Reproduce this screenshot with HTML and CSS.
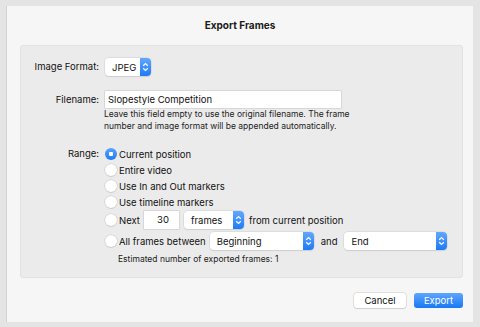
FILE: index.html
```html
<!DOCTYPE html>
<html lang="en">
<head>
  <meta charset="UTF-8" />
  <title>Export Frames</title>
  <link rel="stylesheet" href="styles.css">
</head>
<body>
  <div class="dialog">
    <div class="title">Export Frames</div>

    <div class="group">
      <div class="row format-row">
        <div class="label">Image Format:</div>
        <div class="popup format-popup">
          <span>JPEG</span>
          <span class="stepper"><svg width="7" height="10" viewBox="0 0 7 10"><path d="M1.2 3.8 3.5 1.6 5.8 3.8M1.2 6.2 3.5 8.4 5.8 6.2" fill="none" stroke="#fff" stroke-width="1.2"/></svg></span>
        </div>
      </div>

      <div class="row filename-row">
        <div class="label">Filename:</div>
        <div class="field name-field">Slopestyle Competition</div>
      </div>
      <div class="help">Leave this field empty to use the original filename. The frame<br>number and image format will be appended automatically.</div>

      <div class="row range-row">
        <div class="label">Range:</div>
        <div class="options">
          <div class="option"><span class="radio on"></span>Current position</div>
          <div class="option"><span class="radio"></span>Entire video</div>
          <div class="option"><span class="radio"></span>Use In and Out markers</div>
          <div class="option"><span class="radio"></span>Use timeline markers</div>
          <div class="option next">
            <span class="radio"></span>Next
            <div class="field count-field">30</div>
            <div class="popup unit-popup">
              <span>frames</span>
              <span class="stepper"><svg width="7" height="10" viewBox="0 0 7 10"><path d="M1.2 3.8 3.5 1.6 5.8 3.8M1.2 6.2 3.5 8.4 5.8 6.2" fill="none" stroke="#fff" stroke-width="1.2"/></svg></span>
            </div>
            from current position
          </div>
          <div class="option between">
            <span class="radio"></span>All frames between
            <div class="popup start-popup">
              <span>Beginning</span>
              <span class="stepper"><svg width="7" height="10" viewBox="0 0 7 10"><path d="M1.2 3.8 3.5 1.6 5.8 3.8M1.2 6.2 3.5 8.4 5.8 6.2" fill="none" stroke="#fff" stroke-width="1.2"/></svg></span>
            </div>
            and
            <div class="popup end-popup">
              <span>End</span>
              <span class="stepper"><svg width="7" height="10" viewBox="0 0 7 10"><path d="M1.2 3.8 3.5 1.6 5.8 3.8M1.2 6.2 3.5 8.4 5.8 6.2" fill="none" stroke="#fff" stroke-width="1.2"/></svg></span>
            </div>
          </div>
          <div class="estimate">Estimated number of exported frames: 1</div>
        </div>
      </div>
    </div>

    <div class="buttons">
      <button class="btn cancel">Cancel</button>
      <button class="btn export">Export</button>
    </div>
  </div>
</body>
</html>
```

FILE: styles.css
```css
body { margin: 0; padding: 6px 7px 5px 6px; background: #e4e4e4; font-family: Inter, "Liberation Sans", sans-serif; font-size: 9.5px; color: #111; }
.dialog { height: 316px; background: #f6f6f6; border-left: 1px solid #d2d2d2; box-sizing: border-box; display: flex; flex-direction: column; }
.title { height: 39px; line-height: 38px; text-align: center; font-weight: 700; font-size: 10px; color: #1a1a1a; }
.group { margin: 0 10px 0 13px; height: 233px; background: #ebebeb; border: 1px solid #e2e2e2; border-radius: 3px; box-sizing: border-box; padding-top: 12px; }

.row { display: flex; }
.label { width: 84px; flex: none; text-align: right; padding-right: 6px; box-sizing: border-box; line-height: 18px; }

.popup { display: flex; align-items: center; justify-content: space-between; height: 18px; background: #fff; border-radius: 4px; box-shadow: 0 0 0 0.5px #cfcfcf, 0 1px 1px rgba(0,0,0,0.12); padding-left: 7px; box-sizing: border-box; }
.stepper { width: 11px; height: 18px; background: linear-gradient(#62a8fb, #1d7bf5); border-radius: 0 4px 4px 0; display: flex; align-items: center; justify-content: center; }
.format-popup { width: 46px; }

.field { height: 17px; line-height: 17px; background: #fff; box-shadow: 0 0 0 0.5px #c4c4c4; padding-left: 3px; box-sizing: border-box; }
.filename-row { margin-top: 15px; }
.filename-row .label { line-height: 17px; }
.name-field { width: 236px; }
.help { margin-left: 83px; font-size: 8.5px; line-height: 12px; color: #222; margin-top: 0; }

.range-row { margin-top: 14px; }
.range-row .label { line-height: 16px; }
.options { display: flex; flex-direction: column; }
.option { display: flex; align-items: center; height: 16px; white-space: nowrap; }
.radio { width: 12px; height: 12px; border-radius: 50%; background: #fff; box-shadow: 0 0 0 0.5px #c6c6c6, 0 1px 1px rgba(0,0,0,0.1); margin-right: 2px; flex: none; box-sizing: border-box; }
.radio.on { background: radial-gradient(circle, #fff 0 2px, transparent 2.5px), linear-gradient(#5aa4fb, #1f7cf5); box-shadow: none; }

.next { height: 18px; margin-top: 1px; }
.count-field { width: 35px; height: 18px; line-height: 18px; text-align: center; margin: 0 5px 0 4px; }
.unit-popup { width: 60px; margin-right: 5px; }
.between { height: 18px; margin-top: 3px; }
.start-popup { width: 104px; margin: 0 7px 0 4px; }
.end-popup { width: 103px; margin-left: 7px; }
.estimate { margin-top: 3px; margin-left: 13px; font-size: 8.5px; line-height: 12px; color: #222; }

.buttons { display: flex; justify-content: flex-end; gap: 8px; padding: 15px 10px 0 0; }
.btn { height: 15px; font-family: inherit; font-size: 9.5px; border: none; border-radius: 3px; padding: 0; }
.cancel { width: 52px; background: #fff; color: #111; box-shadow: 0 0 0 0.5px #c8c8c8, 0 1px 1px rgba(0,0,0,0.12); }
.export { width: 49px; background: linear-gradient(#5ea6fb, #1a78f4); color: #fff; }
```
